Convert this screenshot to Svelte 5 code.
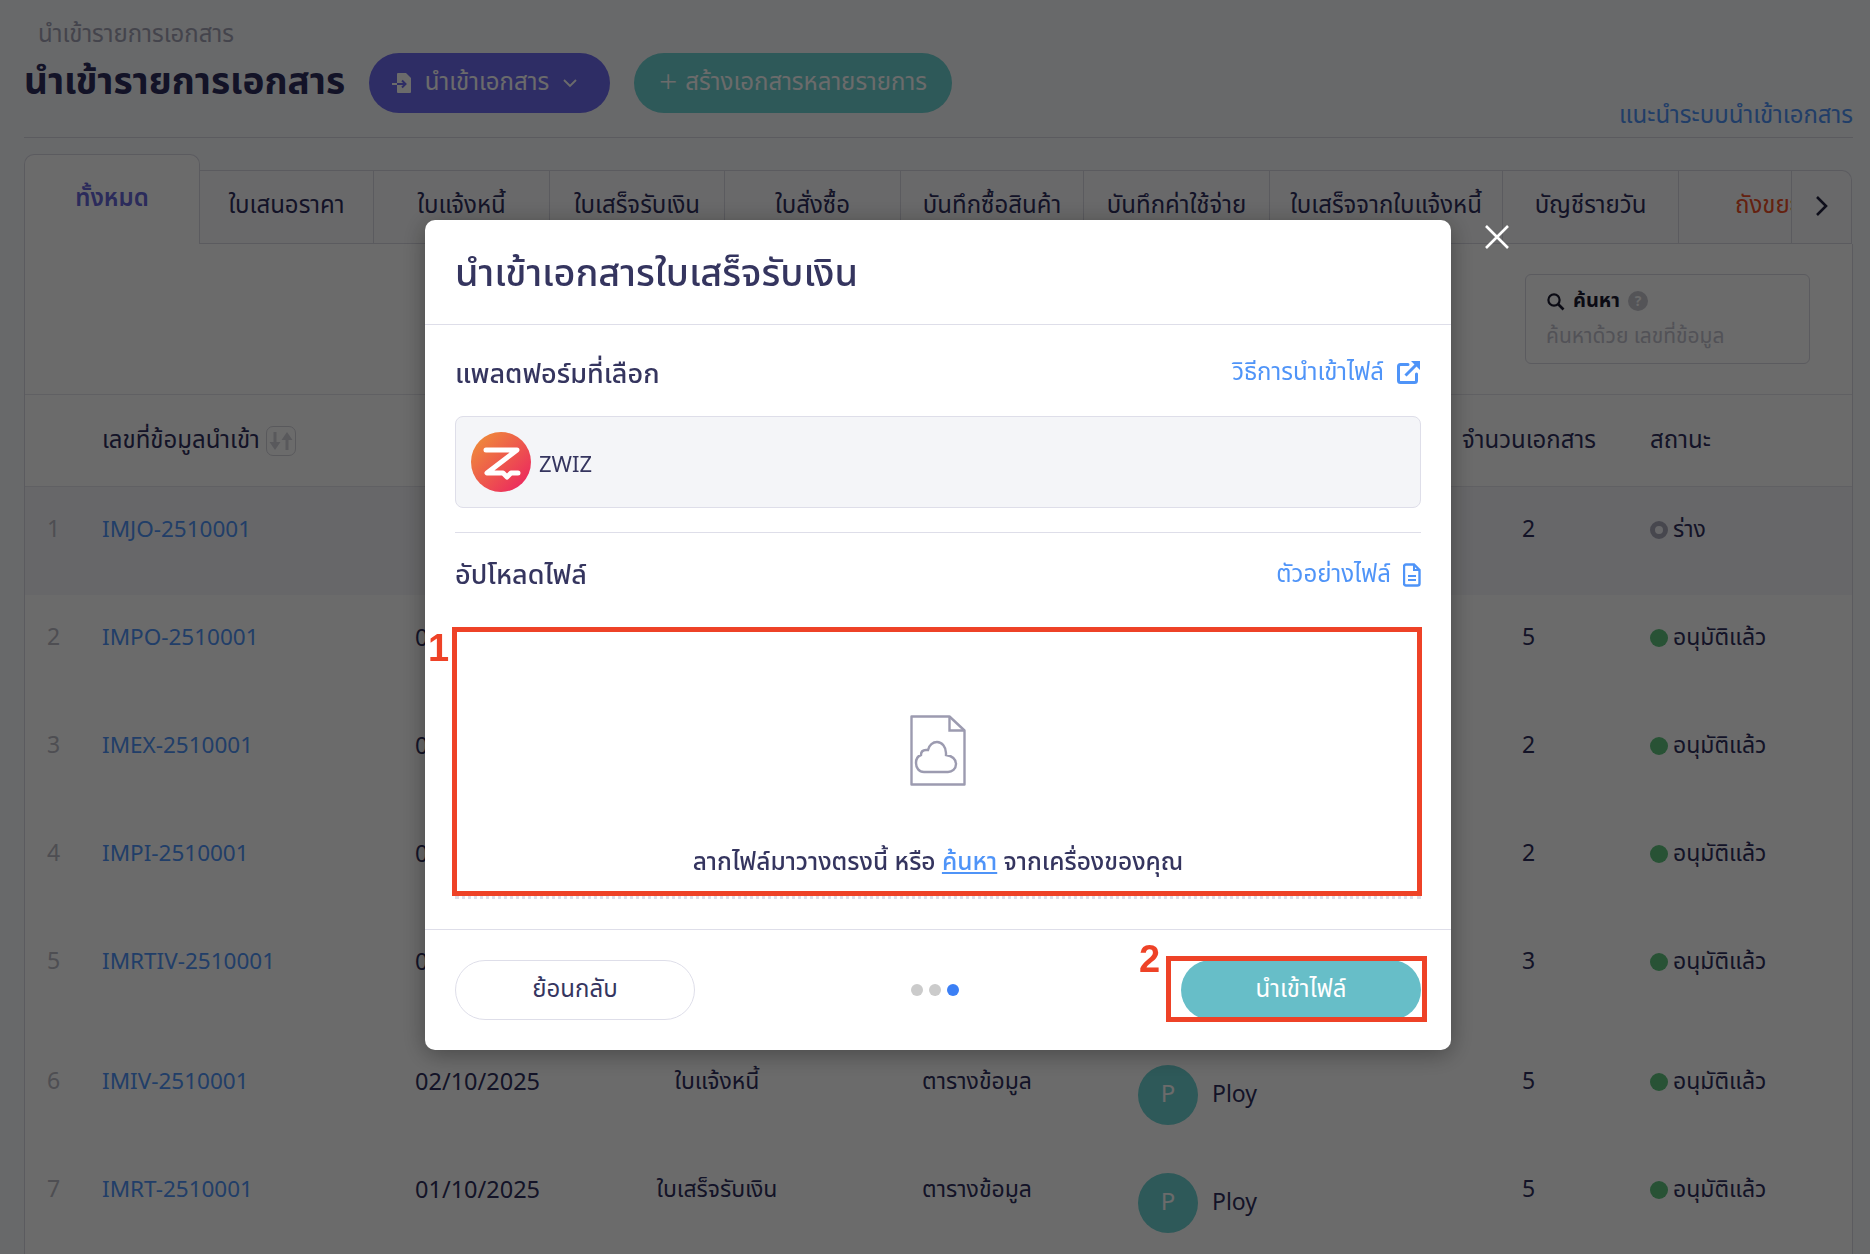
<script lang="ts">
  const tabs = [
    { label: 'ทั้งหมด', active: true },
    { label: 'ใบเสนอราคา' },
    { label: 'ใบแจ้งหนี้' },
    { label: 'ใบเสร็จรับเงิน' },
    { label: 'ใบสั่งซื้อ' },
    { label: 'บันทึกซื้อสินค้า' },
    { label: 'บันทึกค่าใช้จ่าย' },
    { label: 'ใบเสร็จจากใบแจ้งหนี้' },
    { label: 'บัญชีรายวัน' },
    { label: 'ถังขยะ', danger: true }
  ];

  const rows = [
    { no: 1, id: 'IMJO-2510001', date: '', type: '', count: 2, status: 'ร่าง', draft: true, hl: true },
    { no: 2, id: 'IMPO-2510001', date: '03/10/2025', type: 'ใบสั่งซื้อ', count: 5, status: 'อนุมัติแล้ว' },
    { no: 3, id: 'IMEX-2510001', date: '03/10/2025', type: 'ใบเสร็จ', count: 2, status: 'อนุมัติแล้ว' },
    { no: 4, id: 'IMPI-2510001', date: '03/10/2025', type: 'ใบเสร็จ', count: 2, status: 'อนุมัติแล้ว' },
    { no: 5, id: 'IMRTIV-2510001', date: '03/10/2025', type: 'ใบเสร็จ', count: 3, status: 'อนุมัติแล้ว', tall: true },
    { no: 6, id: 'IMIV-2510001', date: '02/10/2025', type: 'ใบแจ้งหนี้', count: 5, status: 'อนุมัติแล้ว' },
    { no: 7, id: 'IMRT-2510001', date: '01/10/2025', type: 'ใบเสร็จรับเงิน', count: 5, status: 'อนุมัติแล้ว' }
  ];
</script>

<div class="page">
  <div class="crumb">นำเข้ารายการเอกสาร</div>
  <header class="head">
    <h1>นำเข้ารายการเอกสาร</h1>
    <button class="pill purple">
      <svg width="20" height="22" viewBox="0 0 20 22">
        <path d="M6 1h8l5 5v14a1 1 0 0 1-1 1H6a1 1 0 0 1-1-1V2a1 1 0 0 1 1-1z" fill="#fff" />
        <path d="M0 12h5" stroke="#fff" stroke-width="2" />
        <path d="M5 12h8M10 8.500l3.500 3.500-3.500 3.500" fill="none" stroke="#6f6cf0" stroke-width="2" />
      </svg>
      <span>นำเข้าเอกสาร</span>
      <svg width="16" height="10" viewBox="0 0 16 10"><path d="M2 2l6 6 6-6" fill="none" stroke="#fff" stroke-width="1.8" /></svg>
    </button>
    <button class="pill teal"><span class="plus">+</span> สร้างเอกสารหลายรายการ</button>
    <a class="guide" href="#guide">แนะนำระบบนำเข้าเอกสาร</a>
  </header>

  <div class="tabs">
    {#each tabs as tab}
      <div class="tab" class:active={tab.active} class:danger={tab.danger}><span>{tab.label}</span></div>
    {/each}
    <div class="tab more">
      <svg width="13" height="20" viewBox="0 0 13 20"><path d="M2 1l9 9-9 9" fill="none" stroke="#23233f" stroke-width="2.6" /></svg>
    </div>
  </div>

  <section class="card">
    <div class="filters">
      <div class="search">
        <div class="search-label">
          <svg width="19" height="19" viewBox="0 0 19 19"><circle cx="8" cy="8" r="5.6" fill="none" stroke="#1c1c30" stroke-width="2.2" /><path d="M12 12l5.5 5.5" stroke="#1c1c30" stroke-width="2.6" /></svg>
          <b>ค้นหา</b>
          <span class="help">?</span>
        </div>
        <div class="search-hint">ค้นหาด้วย เลขที่ข้อมูล</div>
      </div>
    </div>

    <div class="row thead">
      <div></div>
      <div class="id-head">
        เลขที่ข้อมูลนำเข้า
        <span class="sort">
          <svg width="24" height="20" viewBox="0 0 24 20">
            <path d="M4.500 1h3v10h4L6 19 0.500 11h4z" fill="#d4d4dc" />
            <path d="M16.500 19h3V9h4L18 1 12.500 9h4z" fill="#d4d4dc" />
          </svg>
        </span>
      </div>
      <div></div><div></div><div></div><div></div>
      <div class="count">จำนวนเอกสาร</div>
      <div>สถานะ</div>
    </div>

    {#each rows as row}
      <div class="row" class:hl={row.hl} class:tall={row.tall}>
        <div class="no">{row.no}</div>
        <a class="id" href="#doc">{row.id}</a>
        <div class="date">{row.date}</div>
        <div class="type">{row.type}</div>
        <div class="source">{row.date ? 'ตารางข้อมูล' : ''}</div>
        <div class="user">
          {#if row.date}
            <span class="avatar">P</span>
            <span>Ploy</span>
          {/if}
        </div>
        <div class="count">{row.count}</div>
        <div class="status"><span class="dot" class:draft={row.draft}></span>{row.status}</div>
      </div>
    {/each}
  </section>
</div>

<div class="overlay">
  <div class="modal-wrap">
    <button class="close" aria-label="ปิด">
      <svg width="26" height="26" viewBox="0 0 26 26"><path d="M2 2l22 22M24 2L2 24" stroke="#fff" stroke-width="2.6" /></svg>
    </button>

    <div class="modal">
      <h2>นำเข้าเอกสารใบเสร็จรับเงิน</h2>

      <div class="modal-body">
        <div class="sec-head">
          <h3>แพลตฟอร์มที่เลือก</h3>
          <a href="#how">
            วิธีการนำเข้าไฟล์
            <svg width="25" height="25" viewBox="0 0 25 25">
              <path d="M12 4.500H4.500a2 2 0 0 0-2 2v14a2 2 0 0 0 2 2h14a2 2 0 0 0 2-2V14" fill="none" stroke="#4f94f8" stroke-width="3" stroke-linecap="round" />
              <path d="M9.500 15.500L21 4" stroke="#4f94f8" stroke-width="3" />
              <path d="M15 1h9v9z" fill="#4f94f8" />
            </svg>
          </a>
        </div>

        <div class="platform">
          <svg width="60" height="60" viewBox="0 0 60 60">
            <defs>
              <linearGradient id="zw" x1="0" y1="0" x2="1" y2="1">
                <stop offset="0.1" stop-color="#ef8a3a" />
                <stop offset="0.85" stop-color="#ec2f5c" />
              </linearGradient>
            </defs>
            <circle cx="30" cy="30" r="30" fill="url(#zw)" />
            <path d="M15 18h31L16 41h16l4 4 4-4h7" fill="none" stroke="#fff" stroke-width="5" stroke-linejoin="round" stroke-linecap="round" />
          </svg>
          <span>ZWIZ</span>
        </div>

        <div class="divider"></div>

        <div class="sec-head upload">
          <h3>อัปโหลดไฟล์</h3>
          <a href="#sample">
            ตัวอย่างไฟล์
            <svg width="18" height="24" viewBox="0 0 18 24">
              <path d="M3 1.500h8l5.500 5.500v13.500a2 2 0 0 1-2 2H3a2 2 0 0 1-2-2v-17a2 2 0 0 1 2-2z" fill="none" stroke="#4f94f8" stroke-width="2.4" />
              <path d="M11 2v5h5" fill="none" stroke="#4f94f8" stroke-width="2" />
              <path d="M5 13h8M5 17h8" stroke="#4f94f8" stroke-width="2.2" />
            </svg>
          </a>
        </div>

        <div class="drop">
          <svg class="file" width="56" height="71" viewBox="0 0 56 71">
            <path d="M1.500 1.500h38l15 14v54h-53z" fill="#fff" stroke="#9c9bb0" stroke-width="2.4" stroke-linejoin="round" />
            <path d="M39.500 1.500v14h15" fill="none" stroke="#9c9bb0" stroke-width="2.4" />
            <path d="M14 57c-5 0-8-4-8-9 0-4 2-7 5-8 0-3 2-5 5-5 1 0 2 0 2 0 1-5 5-8 9-8 5 0 9 5 9 11v2c6 1 10 4 10 9 0 5-4 8-8 8z" fill="none" stroke="#9c9bb0" stroke-width="2.4" />
          </svg>
          <p>ลากไฟล์มาวางตรงนี้ หรือ <a href="#browse">ค้นหา</a> จากเครื่องของคุณ</p>
          <div class="mark mark-drop"></div>
          <span class="mark-no one">1</span>
        </div>
      </div>

      <div class="modal-foot">
        <button class="foot-btn back">ย้อนกลับ</button>
        <div class="steps"><i></i><i></i><i class="on"></i></div>
        <div class="import-wrap">
          <button class="foot-btn import">นำเข้าไฟล์</button>
          <div class="mark mark-import"></div>
          <span class="mark-no two">2</span>
        </div>
      </div>
    </div>
  </div>
</div>

<style>
  :global(body) {
    margin: 0;
    background: #f8f9fc;
  }

  .page,
  .overlay {
    font-family: "Noto Sans Thai", "Noto Sans", "Open Sans", sans-serif;
  }

  .page {
    height: 1254px;
    overflow: hidden;
    padding: 0 17px 0 24px;
    color: #2f2f5e;
    font-size: 23px;
  }

  .crumb {
    padding: 18px 0 0 14px;
    height: 35px;
    font-size: 24px;
    line-height: 34px;
    color: #a3a3b5;
  }

  .head {
    display: flex;
    align-items: center;
    height: 84px;
    border-bottom: 1px solid #d9d9e3;
    gap: 24px;
    position: relative;
  }

  h1 {
    margin: 0 0 24px;
    font-size: 37px;
    font-weight: 700;
    width: 321px;
    white-space: nowrap;
    color: #2f2f5e;
  }

  .pill {
    height: 60px;
    margin: 0 0 24px;
    border: 0;
    border-radius: 30px;
    color: #fff;
    font: inherit;
    font-size: 24px;
    display: flex;
    align-items: center;
    justify-content: center;
  }

  .purple {
    width: 241px;
    gap: 13px;
    padding: 0 9px 0 0;
    background: #6f6cf0;
  }

  .teal {
    width: 318px;
    gap: 8px;
    background: #6ed3d3;
  }

  .plus {
    font-size: 32px;
    line-height: 1;
    font-weight: 300;
  }

  .guide {
    position: absolute;
    right: 0;
    bottom: 3px;
    color: #4f94f8;
    font-size: 24px;
    text-decoration: none;
  }

  .tabs {
    display: grid;
    grid-template-columns: 176px 174px 176px 175px 176px 183px 186px 233px 176px 113px 60px;
    margin-top: 16px;
    height: 90px;
    align-items: end;
  }

  .tab {
    height: 74px;
    box-sizing: border-box;
    border: 1px solid #d9d9e3;
    border-left: 0;
    display: flex;
    align-items: center;
    justify-content: center;
    background: #fbfbfd;
    font-size: 24px;
    padding-bottom: 2px;
    overflow: hidden;
    white-space: nowrap;
  }

  .tab.active {
    height: 90px;
    border-left: 1px solid #d9d9e3;
    border-bottom: 0;
    border-radius: 10px 10px 0 0;
    background: #fff;
    color: #6766d9;
    font-weight: 600;
  }

  .tab.danger {
    color: #ee4f27;
    justify-content: flex-start;
    padding-left: 56px;
  }

  .tab.more {
    border-radius: 0 10px 0 0;
  }

  .card {
    border: 1px solid #d9d9e3;
    border-top: 0;
    background: #fff;
    height: 1011px;
    overflow: hidden;
  }

  .filters {
    height: 151px;
    position: relative;
    border-bottom: 1px solid #e5e5ec;
    box-sizing: border-box;
  }

  .search {
    position: absolute;
    left: 1500px;
    top: 30px;
    width: 285px;
    height: 90px;
    box-sizing: border-box;
    border: 1px solid #d9d9e3;
    border-radius: 6px;
    padding: 8px 20px;
  }

  .search-label {
    display: flex;
    align-items: center;
    gap: 8px;
    font-size: 20px;
    color: #1c1c30;
    height: 36px;
  }

  .help {
    width: 20px;
    height: 20px;
    border-radius: 50%;
    background: #c8c8d0;
    color: #fff;
    font-size: 14px;
    display: flex;
    align-items: center;
    justify-content: center;
    font-weight: 700;
  }

  .search-hint {
    font-size: 21px;
    color: #c3c3cf;
    margin-top: 2px;
  }

  .row {
    display: grid;
    grid-template-columns: 77px 313px 195px 214px 314px 324px 188px 1fr;
    height: 108px;
    padding-top: 26px;
    box-sizing: border-box;
    align-items: start;
    white-space: nowrap;
  }

  .row.tall {
    height: 120px;
  }

  .row.hl {
    background: #f6f6f9;
  }

  .thead {
    height: 92px;
    padding-top: 0;
    align-items: center;
    background: #fff;
    border-bottom: 1px solid #e5e5ec;
    font-size: 24px;
  }

  .id-head {
    display: flex;
    align-items: center;
    gap: 6px;
  }

  .sort {
    width: 30px;
    height: 30px;
    box-sizing: border-box;
    border: 1px solid #d4d4dc;
    border-radius: 7px;
    display: flex;
    align-items: center;
    justify-content: center;
  }

  .no {
    text-align: center;
    color: #b9b9c4;
    padding-right: 20px;
  }

  .id {
    color: #4f94f8;
    text-decoration: none;
    font-size: 22.500px;
  }

  .date {
    font-size: 23.500px;
  }

  .type {
    text-align: center;
  }

  .source {
    padding-left: 98px;
  }

  .user {
    display: flex;
    align-items: center;
    gap: 14px;
  }

  .avatar {
    width: 60px;
    height: 60px;
    border-radius: 50%;
    background: #6ed3d3;
    color: #fff;
    display: flex;
    align-items: center;
    justify-content: center;
    font-size: 24px;
  }

  .count {
    width: 133px;
    text-align: center;
  }

  .status {
    display: flex;
    align-items: center;
    gap: 5px;
  }

  .dot {
    width: 18px;
    height: 18px;
    border-radius: 50%;
    background: #5fc47f;
    box-sizing: border-box;
  }

  .dot.draft {
    background: transparent;
    border: 5px solid #a9a9bb;
  }

  .overlay {
    position: fixed;
    inset: 0;
    background: rgba(0, 0, 0, 0.58);
    display: flex;
    justify-content: center;
    align-items: flex-start;
    padding-top: 220px;
    color: #35355f;
  }

  .modal-wrap {
    position: relative;
    margin-left: 6px;
  }

  .close {
    position: absolute;
    left: 1059px;
    top: 4px;
    background: none;
    border: 0;
    padding: 0;
  }

  .modal {
    width: 1026px;
    height: 830px;
    background: #fff;
    border-radius: 10px;
    display: flex;
    flex-direction: column;
    box-shadow: 0 4px 24px rgba(0, 0, 0, 0.35);
  }

  h2 {
    margin: 0;
    height: 105px;
    box-sizing: border-box;
    padding: 4px 30px 0;
    display: flex;
    align-items: center;
    border-bottom: 1px solid #dedee9;
    font-size: 37.800px;
    font-weight: 500;
    color: #35355f;
    white-space: nowrap;
  }

  .modal-body {
    padding: 0 30px;
    flex: 1;
    display: flex;
    flex-direction: column;
  }

  .sec-head {
    display: flex;
    justify-content: space-between;
    align-items: center;
    height: 91px;
    box-sizing: border-box;
    padding-top: 4px;
  }

  .sec-head.upload {
    height: 84px;
    padding-top: 0;
    margin-bottom: 10px;
  }

  h3 {
    margin: 0;
    font-size: 27px;
    font-weight: 500;
    color: #35355f;
  }

  .sec-head:first-child h3 {
    padding-top: 4px;
  }

  .sec-head a {
    display: flex;
    align-items: center;
    gap: 12px;
    color: #4f94f8;
    font-size: 24px;
    text-decoration: none;
  }

  .platform {
    height: 92px;
    box-sizing: border-box;
    background: #f4f5f8;
    border: 1px solid #dedee9;
    border-radius: 8px;
    display: flex;
    align-items: center;
    padding-left: 15px;
    gap: 8px;
    font-size: 22px;
    color: #35355f;
  }

  .platform span {
    padding-top: 6px;
  }

  .divider {
    height: 1px;
    background: #dedee9;
    margin-top: 24px;
  }

  .drop {
    position: relative;
    height: 269px;
    border-bottom: 3px dotted #dedee9;
    display: flex;
    flex-direction: column;
    align-items: center;
  }

  .file {
    margin-top: 88px;
  }

  .drop p {
    margin: 58px 0 0;
    font-size: 24.500px;
    font-weight: 500;
    color: #35355f;
    white-space: nowrap;
  }

  .drop p a {
    color: #4f94f8;
  }

  .mark {
    position: absolute;
    border: 5px solid #ee4227;
    box-sizing: border-box;
    pointer-events: none;
  }

  .mark-drop {
    left: -3px;
    right: -1px;
    top: 0;
    bottom: 0;
  }

  .mark-no {
    position: absolute;
    color: #ee4227;
    font-family: "Liberation Sans", sans-serif;
    font-weight: 700;
    font-size: 38px;
    line-height: 1;
  }

  .one {
    left: -27px;
    top: 2px;
  }

  .two {
    left: -42px;
    top: -20px;
  }

  .modal-foot {
    height: 121px;
    box-sizing: border-box;
    border-top: 1px solid #dedee9;
    padding: 30px 30px 0;
    display: flex;
    justify-content: space-between;
    align-items: flex-start;
  }

  .foot-btn {
    width: 240px;
    height: 60px;
    border-radius: 30px;
    font: inherit;
    font-size: 24px;
  }

  .back {
    background: #fff;
    border: 1px solid #dedee9;
    color: #35355f;
  }

  .import {
    background: #67bec8;
    border: 0;
    color: #fff;
  }

  .steps {
    display: flex;
    gap: 6px;
    align-items: center;
    height: 60px;
    margin-left: -6px;
  }

  .steps i {
    width: 12px;
    height: 12px;
    border-radius: 50%;
    background: #cbcbcb;
  }

  .steps i.on {
    background: #3b7ff5;
  }

  .import-wrap {
    position: relative;
    height: 60px;
  }

  .mark-import {
    left: -15px;
    right: -6px;
    top: -4px;
    bottom: -2px;
  }
</style>
